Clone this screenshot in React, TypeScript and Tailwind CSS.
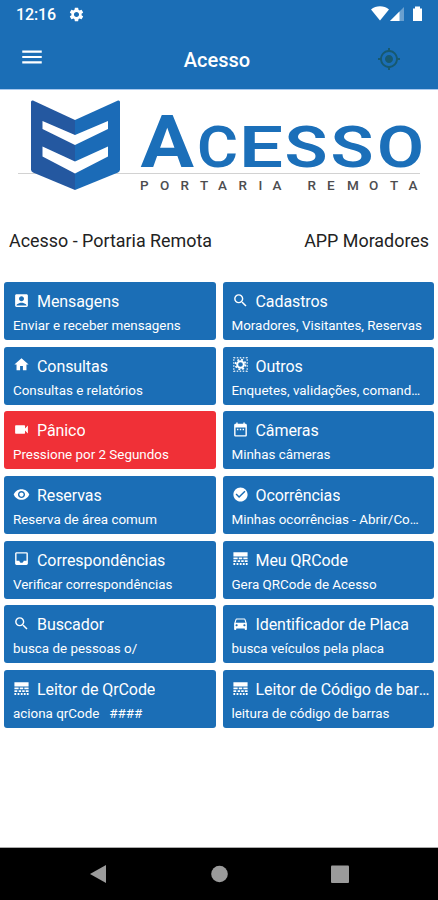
import type { IconType } from "react-icons";
import {
  MdAccountBox,
  MdCheckCircle,
  MdDateRange,
  MdDirectionsCar,
  MdGpsFixed,
  MdHome,
  MdInbox,
  MdMenu,
  MdSearch,
  MdSettings,
  MdVideocam,
  MdVisibility,
} from "react-icons/md";

type Tile = {
  title: string;
  description: string;
  icon: IconType;
  danger?: boolean;
};

function LineStyleIcon({ className }: { className?: string }) {
  return (
    <svg className={className} viewBox="0 0 24 24" fill="currentColor">
      <path d="M2 3h20v6H2zM2 10.500h6v2.500H2zM9.500 10.500h5v2.500h-5zM16 10.500h6v2.500h-6zM2 14.500h4v2.500H2zM8 14.500h3.500v2.500H8zM13 14.500h3.500v2.500H13zM18 14.500h4v2.500h-4zM2 18.500h2.500V21H2zM6.500 18.500H9V21H6.500zM11 18.500h2.500V21H11zM15.300 18.500h2.500V21h-2.500zM19.500 18.500H22V21h-2.500z" />
    </svg>
  );
}

function DottedGearIcon({ className }: { className?: string }) {
  return (
    <svg className={className} viewBox="0 0 24 24" fill="none" stroke="currentColor">
      <rect x="2.500" y="2.500" width="19" height="19" strokeWidth="2" strokeDasharray="2.200 2.022" opacity=".8" />
      <circle cx="12" cy="12" r="4.700" strokeWidth="2.800" />
      <circle cx="12" cy="12" r="7" strokeWidth="2.400" strokeDasharray="2.749 2.749" />
    </svg>
  );
}

const tiles: Tile[] = [
  { title: "Mensagens", description: "Enviar e receber mensagens", icon: MdAccountBox },
  { title: "Cadastros", description: "Moradores, Visitantes, Reservas", icon: MdSearch },
  { title: "Consultas", description: "Consultas e relatórios", icon: MdHome },
  { title: "Outros", description: "Enquetes, validações, comandos", icon: DottedGearIcon },
  { title: "Pânico", description: "Pressione por 2 Segundos", icon: MdVideocam, danger: true },
  { title: "Câmeras", description: "Minhas câmeras", icon: MdDateRange },
  { title: "Reservas", description: "Reserva de área comum", icon: MdVisibility },
  { title: "Ocorrências", description: "Minhas ocorrências - Abrir/Consultar", icon: MdCheckCircle },
  { title: "Correspondências", description: "Verificar correspondências", icon: MdInbox },
  { title: "Meu QRCode", description: "Gera QRCode de Acesso", icon: LineStyleIcon },
  { title: "Buscador", description: "busca de pessoas o/", icon: MdSearch },
  { title: "Identificador de Placa", description: "busca veículos pela placa", icon: MdDirectionsCar },
  { title: "Leitor de QrCode", description: "aciona qrCode   ####", icon: LineStyleIcon },
  { title: "Leitor de Código de barras", description: "leitura de código de barras", icon: LineStyleIcon },
];

function StatusBar() {
  return (
    <div className="flex h-7 items-center justify-between pr-[15px] pl-4 text-white">
      <div className="flex items-center gap-3">
        <span className="pt-0.5 text-base font-medium tracking-[-0.1px]">12:16</span>
        <MdSettings className="size-[17px]" />
      </div>
      <svg className="h-[18px] w-[52px]" viewBox="0 0 52 18" fill="currentColor">
        <path d="M0 4.500C5 .3 13 .3 18 4.500L9 15.500z" />
        <path d="M33 2v14H19z" opacity=".35" />
        <path d="M28.500 6.500V16H19z" />
        <path d="M42 3.500h2V1.500h5v2h2V16h-9z" />
      </svg>
    </div>
  );
}

function Logo() {
  return (
    <svg className="block h-[120px] w-full" viewBox="0 0 438 120" role="img" aria-label="Acesso Portaria Remota">
      <path d="M18 83.500h402" stroke="#d2d2d2" />
      <path d="M31 12q0-2 2-1.500L75 30v70L33 82.500q-2-1-2-3z" fill="#2458a0" />
      <path d="M120 12q0-2-2-1.500L75 30v70l43-17.500q2-1 2-3z" fill="#1b6bb7" />
      <path d="M42.500 31L75 45l33-14v8L75 55 42.500 39zM42.500 56.500L75 71.500l33-15v10L75 83.500 42.500 66.500z" fill="#fff" />
      <g fill="#1b6fb9" fontFamily="Roboto, sans-serif" fontWeight="700">
        <text x="140.500" y="77" fontSize="72" textLength="53.500" lengthAdjust="spacingAndGlyphs">A</text>
        <g fontSize="58" fontWeight="600">
          <text x="197" y="77" textLength="41" lengthAdjust="spacingAndGlyphs">C</text>
          <text x="239" y="77" textLength="44" lengthAdjust="spacingAndGlyphs">E</text>
          <text x="284.500" y="77" textLength="43" lengthAdjust="spacingAndGlyphs">S</text>
          <text x="330.500" y="77" textLength="43" lengthAdjust="spacingAndGlyphs">S</text>
          <text x="377" y="77" textLength="47" lengthAdjust="spacingAndGlyphs">O</text>
        </g>
      </g>
      <g fill="#4d4d4f" fontFamily="Roboto, sans-serif" fontSize="13.500" fontWeight="500">
        <text x="140 160 180.500 200 218 238.500 258.500 272.500" y="100">PORTARIA</text>
        <text x="307.500 327 347 369 390 408.500" y="100">REMOTA</text>
      </g>
    </svg>
  );
}

function MenuTile({ title, description, icon: Icon, danger }: Tile) {
  return (
    <button
      type="button"
      className={`flex h-[58px] min-w-0 flex-col rounded-[3px] px-[9px] pt-[7px] text-left text-white ${
        danger ? "bg-[#f03037]" : "bg-[#1b6eb6]"
      }`}
    >
      <span className="flex w-full items-center gap-[7px]">
        <Icon className="mb-[3px] size-[17px] shrink-0" />
        <span className="-mr-2 truncate text-base leading-[25px] tracking-[-0.08px]">{title}</span>
      </span>
      <span className="mt-0.5 w-full truncate text-[13.4px] leading-5 whitespace-pre">{description}</span>
    </button>
  );
}

export default function App() {
  return (
    <div className="flex h-[900px] w-[438px] flex-col overflow-hidden bg-white font-[Roboto,sans-serif]">
      <header className="h-[90px] shrink-0 border-b border-[#a9c9ee] bg-[#1b6eb6]">
        <StatusBar />
        <div className="grid h-[61px] grid-cols-3 items-center px-[19px] text-white">
          <button type="button" aria-label="Menu">
            <MdMenu className="mb-1 size-[26px]" />
          </button>
          <h1 className="pt-0.5 pr-1 text-center text-xl font-medium">Acesso</h1>
          <MdGpsFixed className="mr-[18px] size-6 justify-self-end text-[#17596f]" />
        </div>
      </header>

      <main className="flex-1">
        <Logo />
        <div className="flex h-[72px] items-center justify-between px-[9px] pb-2.5 text-[17.9px] text-[#222]">
          <span>Acesso - Portaria Remota</span>
          <span>APP Moradores</span>
        </div>
        <div className="grid grid-cols-2 gap-x-[7px] gap-y-[6.7px] px-1">
          {tiles.map((tile) => (
            <MenuTile key={tile.title} {...tile} />
          ))}
        </div>
      </main>

      <nav className="flex h-[53px] shrink-0 items-center border-t border-[#aaa] bg-black">
        <svg className="h-6 w-full" viewBox="0 0 438 24" fill="#9b9b9b">
          <path d="M90 12l16-9v18z" />
          <circle cx="219.500" cy="12" r="8.300" />
          <rect x="331" y="3.500" width="18" height="17.500" rx="1" />
        </svg>
      </nav>
    </div>
  );
}
